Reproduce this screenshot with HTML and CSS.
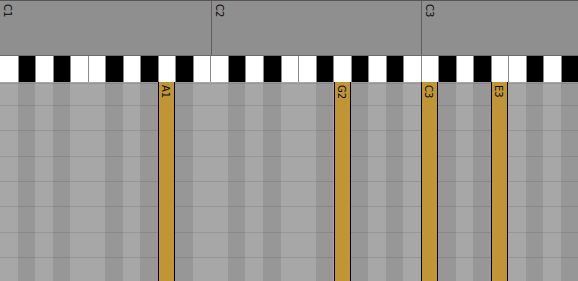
FILE: index.html
```
<!DOCTYPE html>
<html lang="en">
<head>
  <meta charset="UTF-8">
  <title>Piano Roll</title>
  <link rel="stylesheet" href="styles.css">
</head>
<body>
  <div class="roll">
    <div class="octaves">
      <div class="octave"><span class="label">C1</span></div>
      <div class="octave"><span class="label">C2</span></div>
      <div class="octave"><span class="label">C3</span></div>
    </div>
    <div class="keys">
      <div class="key white"></div><div class="key black"></div><div class="key white"></div><div class="key black"></div><div class="key white"></div>
      <div class="key white"></div><div class="key black"></div><div class="key white"></div><div class="key black"></div><div class="key white"></div><div class="key black"></div><div class="key white"></div>
      <div class="key white"></div><div class="key black"></div><div class="key white"></div><div class="key black"></div><div class="key white"></div>
      <div class="key white"></div><div class="key black"></div><div class="key white"></div><div class="key black"></div><div class="key white"></div><div class="key black"></div><div class="key white"></div>
      <div class="key white"></div><div class="key black"></div><div class="key white"></div><div class="key black"></div><div class="key white"></div>
      <div class="key white"></div><div class="key black"></div><div class="key white"></div><div class="key black"></div><div class="key white"></div>
    </div>
    <div class="lanes">
      <div class="lane light"></div><div class="lane dark"></div><div class="lane light"></div><div class="lane dark"></div><div class="lane light"></div>
      <div class="lane light"></div><div class="lane dark"></div><div class="lane light"></div><div class="lane dark"></div>
      <div class="lane light"><div class="note"><span class="label">A1</span></div></div>
      <div class="lane dark"></div><div class="lane light"></div>
      <div class="lane light"></div><div class="lane dark"></div><div class="lane light"></div><div class="lane dark"></div><div class="lane light"></div>
      <div class="lane light"></div><div class="lane dark"></div>
      <div class="lane light"><div class="note"><span class="label">G2</span></div></div>
      <div class="lane dark"></div><div class="lane light"></div><div class="lane dark"></div><div class="lane light"></div>
      <div class="lane light"><div class="note"><span class="label">C3</span></div></div>
      <div class="lane dark"></div><div class="lane light"></div><div class="lane dark"></div>
      <div class="lane light"><div class="note"><span class="label">E3</span></div></div>
      <div class="lane light"></div><div class="lane dark"></div><div class="lane light"></div><div class="lane dark"></div><div class="lane light"></div>
    </div>
  </div>
</body>
</html>
```

FILE: styles.css
```
* {
  box-sizing: border-box;
}

body {
  margin: 0;
  font-family: 'DejaVu Sans', Verdana, sans-serif;
  background: #a6a6a6;
}

/* one octave = 12 keys, a key is 210.5 / 12 px wide */
.roll {
  display: flex;
  flex-direction: column;
  width: 578px;
  height: 281px;
  overflow: hidden;
}

.octaves {
  display: flex;
  height: 56px;
  flex: none;
  background: #8f8f8f;
  border-top: 1px solid #555;
  border-bottom: 1px solid #6b6b6b;
}

.octave {
  width: 210.5px;
  flex: none;
  padding: 3px 0 0 3px;
}

.octave + .octave {
  border-left: 1px solid #5f5f5f;
}

.label {
  display: block;
  writing-mode: vertical-rl;
  font-size: 10px;
  line-height: 9px;
  color: #0a0a0a;
}

.keys {
  display: flex;
  height: 26px;
  flex: none;
  background: #8a8a8a;
}

.key {
  width: 17.5417px;
  flex: none;
  border-left: 1px solid #8a8a8a;
}

.key:first-child {
  border-left: none;
}

.key.white {
  background: #fff;
}

.key.black {
  background: #000;
}

.lanes {
  display: flex;
  flex: 1;
}

.lane {
  width: 17.5417px;
  flex: none;
  background-image: repeating-linear-gradient(to bottom, rgba(0, 0, 0, 0.1) 0, rgba(0, 0, 0, 0.1) 1px, transparent 1px, transparent 25.333px);
  background-position: 0 23px;
}

.lane.light {
  background-color: #a7a7a7;
}

.lane.dark {
  background-color: #979797;
}

.note {
  height: 100%;
  margin-left: 0.5px;
  background: #c09536;
  border-left: 1px solid #000;
  border-right: 1px solid #000;
  padding: 3px 0 0 2px;
}
```
